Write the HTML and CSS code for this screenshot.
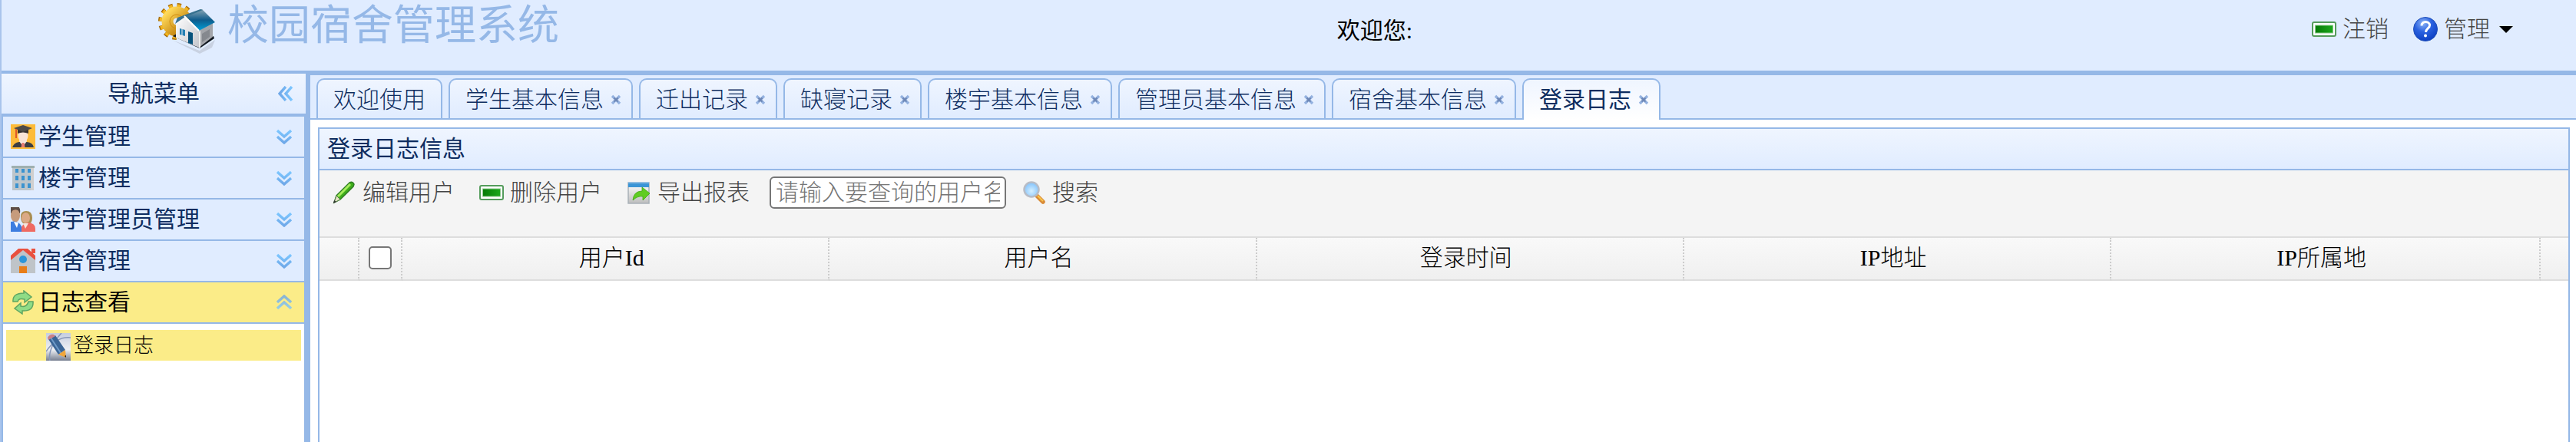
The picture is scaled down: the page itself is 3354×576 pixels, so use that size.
FILE: index.html
```html
<!DOCTYPE html>
<html lang="zh-CN">
<head>
<meta charset="utf-8">
<title>校园宿舍管理系统</title>
<link rel="stylesheet" href="styles.css">
</head>
<body>
<svg width="0" height="0" class="defs" aria-hidden="true">
  <defs>
    <linearGradient id="gold" x1="0" y1="0" x2="1" y2="1"><stop offset="0" stop-color="#ffd95a"/><stop offset="1" stop-color="#b87400"/></linearGradient>
    <linearGradient id="roof" x1="0" y1="0" x2="0" y2="1"><stop offset="0" stop-color="#8aa6b4"/><stop offset=".5" stop-color="#0f5c8c"/><stop offset="1" stop-color="#00a0d8"/></linearGradient>
    <linearGradient id="wall" x1="0" y1="0" x2="1" y2="1"><stop offset="0" stop-color="#fff"/><stop offset="1" stop-color="#c4c6cc"/></linearGradient>
    <linearGradient id="chev" x1="0" y1="0" x2="0" y2="1"><stop offset="0" stop-color="#7cc6ff"/><stop offset="1" stop-color="#6fa8e8"/></linearGradient>
    <linearGradient id="green" x1="0" y1="0" x2="1" y2="0"><stop offset="0" stop-color="#067a06"/><stop offset="1" stop-color="#1ca81c"/></linearGradient>
    <linearGradient id="sheet" x1="0" y1="0" x2="0" y2="1"><stop offset="0" stop-color="#fff"/><stop offset="1" stop-color="#bdbdbd"/></linearGradient>
    <radialGradient id="ball" cx=".4" cy=".25" r=".8"><stop offset="0" stop-color="#8db4f6"/><stop offset=".45" stop-color="#2b62e0"/><stop offset="1" stop-color="#0a3cc0"/></radialGradient>
    <radialGradient id="lens" cx=".5" cy=".6" r=".6"><stop offset="0" stop-color="#d4efff"/><stop offset="1" stop-color="#7fc0fb"/></radialGradient>
    <linearGradient id="sky" x1="0" y1="0" x2="0" y2="1"><stop offset="0" stop-color="#c4cde0"/><stop offset=".6" stop-color="#eef0f4"/><stop offset="1" stop-color="#777f90"/></linearGradient>
    <symbol id="i-down" viewBox="0 0 20 20"><path d="M1 2l9 8 9-8M1 10l9 8 9-8" fill="none" stroke="url(#chev)" stroke-width="3.400"/></symbol>
    <symbol id="i-minus" viewBox="0 0 32 20"><rect x="1" y="1" width="30" height="18" rx="2" fill="#fff" stroke="#559c5c" stroke-width="2"/><rect x="4.500" y="5" width="23" height="10" fill="url(#green)" stroke="#8fcb8f"/></symbol>
    <symbol id="i-close" viewBox="0 0 14 14"><path d="M2 2l10 10M12 2L2 12" stroke="#94b2e0" stroke-width="3.400"/><path d="M4.500 4.500l5 5M9.500 4.500l-5 5" stroke="#6d86b4" stroke-width="2"/></symbol>
  </defs>
</svg>

<header class="top">
  <svg class="logo" viewBox="0 0 76 72" aria-hidden="true">
    <circle cx="24" cy="28" r="20" fill="none" stroke="#a86c08" stroke-width="8" stroke-dasharray="5 5.470"/>
    <circle cx="24" cy="28" r="19" fill="none" stroke="#f3b51e" stroke-width="7" stroke-dasharray="4.400 5.547"/>
    <circle cx="24" cy="28" r="12" fill="none" stroke="url(#gold)" stroke-width="15"/>
    <circle cx="24" cy="28" r="9" fill="none" stroke="#d08c10" stroke-width="1"/>
    <path d="M18 52l36 14 20-14-4 10-16 8z" fill="#c9d2e2"/>
    <path d="M19 47l5-3 30 12 18-9 1 3-19 13z" fill="#111820"/>
    <path d="M23 30l12-9 18 20v21L23 49z" fill="url(#wall)"/>
    <path d="M53 40l18-12v20L53 62z" fill="#a3a5aa"/>
    <path d="M57 44l10-6v10l-10 7z" fill="#85888e"/>
    <path d="M53 41l2-1v22l-2 1z" fill="#eee"/>
    <path d="M35 20l22-8 17 17-21 11z" fill="url(#roof)"/>
    <path d="M22 31l3-8 30-11 3 1-23 9z" fill="#36718f"/>
    <path d="M34 21l19 19" stroke="#fff" stroke-width="2"/>
    <path d="M28 37l7 2v8l-7-2z" fill="#2580b4"/><path d="M31 37v10" stroke="#e3e8ee" stroke-width="1"/>
    <path d="M39 41l6 2v15l-6-2z" fill="#07527c"/>
  </svg>
  <h1>校园宿舍管理系统</h1>
  <p class="welcome">欢迎您:</p>
  <nav class="actions">
    <button class="btn"><svg class="w32 h20"><use href="#i-minus"/></svg>注销</button>
    <button class="btn"><svg class="w32 h32" viewBox="0 0 32 32"><circle cx="16" cy="16" r="15.500" fill="url(#ball)" stroke="#2150b8"/><path d="M11 11.500c0-7 10.500-6.500 10.500-.5 0 4-5 4-5 9" fill="none" stroke="#fff" stroke-width="3"/><circle cx="16" cy="24.500" r="2" fill="#fff"/></svg>管理<svg class="caret" viewBox="0 0 18 10"><path d="M0 1h18L9 10z"/></svg></button>
  </nav>
</header>

<div class="layout">
  <aside class="side">
    <div class="side-head"><h2>导航菜单</h2><button class="icon-btn" aria-label="收起"><svg class="w20 h20 turn"><use href="#i-down"/></svg></button></div>
    <nav class="menu">
      <button class="group"><svg class="w32 h32" viewBox="0 0 32 32"><path d="M0 0h32v32H0z" fill="#fdbb3a"/><path d="M2 30q2-6 9-7h10q8 1 9 7z" fill="#3c3e42"/><path d="M11 22l5 7 5-7-1-4h-8z" fill="#f7e9e2"/><path d="M14.500 24h3l1 6h-5z" fill="#e87d72"/><ellipse cx="16" cy="15" rx="6.500" ry="8" fill="#f8e3d7"/><path d="M9 7h14v5q-7-3-14 0z" fill="#36302f"/><path d="M4 5l12-4 12 4-12 5z" fill="#4d4a48"/><path d="M7 6v12" stroke="#e05a28" stroke-width="2"/></svg><span>学生管理</span><svg class="w20 h20"><use href="#i-down"/></svg></button>
      <button class="group"><svg class="w32 h32" viewBox="0 0 32 32"><path d="M2 2h28v30H2z" fill="#bcc5cb"/><path d="M1 0h30v3H1z" fill="#9fb0b0"/><path d="M26 3h4v29h-4z" fill="#d0cfcf"/><path d="M6 4h4v5H6zM14 4h4v5h-4zM22 4h4v5h-4zM6 13h4v6H6zM14 13h4v6h-4zM22 13h4v6h-4zM6 23h4v6H6zM14 23h4v6h-4zM22 23h4v6h-4z" fill="#3b93d0"/></svg><span>楼宇管理</span><svg class="w20 h20"><use href="#i-down"/></svg></button>
      <button class="group"><svg class="w32 h32" viewBox="0 0 32 32"><path d="M0 8V0h10q3 2 2 8z" fill="#50423c"/><ellipse cx="6" cy="11" rx="6" ry="8.500" fill="#c69b7c"/><path d="M0 6q5-5 12-1l-1-5H0z" fill="#5d4d45"/><path d="M0 19q10-2 14 6v7H0z" fill="#3d7de0"/><path d="M4 19l4 8 2-7z" fill="#fff"/><path d="M13 12q0-7 7-7 8 0 8 9 0 7-5 8h-5q-5-2-5-10z" fill="#a98d50"/><ellipse cx="19.500" cy="14" rx="5.500" ry="7" fill="#dba985"/><path d="M14 32v-6q2-5 9-6 9 1 9 8v4z" fill="#ef6a62"/><path d="M16 21l3 7 4-7z" fill="#f6e4da"/></svg><span>楼宇管理员管理</span><svg class="w20 h20"><use href="#i-down"/></svg></button>
      <button class="group"><svg class="w32 h32" viewBox="0 0 32 32"><path d="M0 14L16 2l16 12v18H0z" fill="#bfc4c8"/><path d="M24 0h7v10l-7-5z" fill="#e6e6e6"/><path d="M0 9L10 0h12l10 9v6L16 2 0 15z" fill="#e9503f"/><path d="M27 0h5v6h-5z" fill="#e9503f"/><circle cx="16" cy="14" r="5" fill="#2c95d8"/><path d="M11 23h10v9H11z" fill="#e87d18"/></svg><span>宿舍管理</span><svg class="w20 h20"><use href="#i-down"/></svg></button>
      <button class="group open"><svg class="w32 h32" viewBox="0 0 32 32"><path d="M3 15Q2 4 17 4V1l10 8-9 7v-4q-8-2-9 3z" fill="#8fdc86" stroke="#5fa562" stroke-width="1.500"/><path d="M29 15q1 13-14 12v4L5 24l8-7v4q8 2 10-6z" fill="#8fdc86" stroke="#5fa562" stroke-width="1.500"/></svg><span>日志查看</span><svg class="w20 h20 flip"><use href="#i-down"/></svg></button>
      <ul class="tree">
        <li><a href="#log"><svg class="w32 h36" viewBox="0 0 32 36"><path d="M0 0h32v36H0z" fill="url(#sky)"/><path d="M0 24q14-20 32-18M5 36Q2 20 20 0" fill="none" stroke="#8797b8" stroke-width="1.500"/><path d="M3 8l9-5 13 19-9 6z" fill="#3a6596"/><path d="M6 6l13 20" stroke="#6e9ac8" stroke-width="2"/><path d="M2 6q3-5 8-4l2 2-9 5z" fill="#c98188"/><path d="M16 28l9-6 1 10z" fill="#f0a63c"/><path d="M24 30l2 2v-3z" fill="#222"/></svg>登录日志</a></li>
      </ul>
    </nav>
  </aside>

  <main class="main">
    <div class="tabs">
      <div class="tab"><button>欢迎使用</button></div>
      <div class="tab"><button>学生基本信息</button><button class="close" aria-label="关闭"><svg><use href="#i-close"/></svg></button></div>
      <div class="tab"><button>迁出记录</button><button class="close" aria-label="关闭"><svg><use href="#i-close"/></svg></button></div>
      <div class="tab"><button>缺寝记录</button><button class="close" aria-label="关闭"><svg><use href="#i-close"/></svg></button></div>
      <div class="tab"><button>楼宇基本信息</button><button class="close" aria-label="关闭"><svg><use href="#i-close"/></svg></button></div>
      <div class="tab"><button>管理员基本信息</button><button class="close" aria-label="关闭"><svg><use href="#i-close"/></svg></button></div>
      <div class="tab"><button>宿舍基本信息</button><button class="close" aria-label="关闭"><svg><use href="#i-close"/></svg></button></div>
      <div class="tab selected"><button>登录日志</button><button class="close" aria-label="关闭"><svg><use href="#i-close"/></svg></button></div>
    </div>
    <section class="panel">
      <h2 class="panel-title">登录日志信息</h2>
      <div class="toolbar">
        <button class="btn"><svg class="w32 h32" viewBox="0 0 32 32"><path d="M3 29l3-9L23 3q4-2 6 2l-1 3-17 17z" fill="#3fae1c" stroke="#2e7d22" stroke-width="1.500"/><path d="M8 21L24 5" stroke="#a6ec5c" stroke-width="3"/><path d="M3 29l3-9 5 5z" fill="#e6e3c4" stroke="#59804e"/><path d="M2 30l1-4 3 2z" fill="#333"/></svg>编辑用户</button>
        <button class="btn"><svg class="w32 h20"><use href="#i-minus"/></svg>删除用户</button>
        <button class="btn"><svg class="w32 h32" viewBox="0 0 32 32"><path d="M2 3h27v27H2z" fill="url(#sheet)" stroke="#a9b1b8" stroke-width="1.500"/><path d="M2 2h27v7H2z" fill="#3a94d6"/><path d="M2 2h27v2H2z" fill="#8dbbe0"/><path d="M8 26q1-12 12-12V9l10 8-9 9v-5q-7-1-13 5z" fill="#5fcc22" stroke="#3ca80e" stroke-width=".8"/></svg>导出报表</button>
        <input class="query" type="text" placeholder="请输入要查询的用户名" aria-label="请输入要查询的用户名">
        <button class="btn"><svg class="w32 h32" viewBox="0 0 32 32"><path d="M20 20l8 8" stroke="#d98b38" stroke-width="5.500" stroke-linecap="round"/><path d="M21 20l7 7" stroke="#f8c64c" stroke-width="2"/><circle cx="13" cy="12" r="9.500" fill="url(#lens)" stroke="#b7bcc6" stroke-width="2.500"/></svg>搜索</button>
      </div>
      <table class="grid">
        <colgroup><col class="c-num"><col class="c-check"><col class="c-data"><col class="c-data"><col class="c-data"><col class="c-data"><col><col class="c-end"></colgroup>
        <thead><tr><th></th><th class="pick"><input type="checkbox" aria-label="全选"></th><th>用户Id</th><th>用户名</th><th>登录时间</th><th>IP地址</th><th>IP所属地</th><th></th></tr></thead>
      </table>
    </section>
  </main>
</div>
</body>
</html>
```
FILE: styles.css
```css
* { box-sizing: border-box; }
:root {
  --line: #95b8e7;
  --sky: #e0ecff;
  --ink: #0e2d5f;
}
body {
  margin: 0;
  min-height: 100vh;
  display: flex;
  flex-direction: column;
  border-left: 2px solid #a9c4ec;
  font: 300 30px/40px "Liberation Serif", "Noto Sans CJK SC", serif;
  color: #000;
}
h1, h2, p, ul { margin: 0; padding: 0; font-weight: 400; }
button {
  margin: 0;
  padding: 0;
  border: 0;
  background: none;
  font: inherit;
  color: inherit;
  cursor: pointer;
}
svg { display: block; flex: none; }
.defs { position: absolute; }
.w20 { width: 20px; }
.w32 { width: 32px; }
.h20 { height: 20px; }
.h32 { height: 32px; }
.h36 { height: 36px; }
.turn { transform: rotate(90deg); }
.flip { transform: rotate(180deg); opacity: .8; }

.top {
  display: grid;
  grid-template-columns: 76px 1fr auto 1fr;
  align-items: start;
  height: 96px;
  padding: 0 82px 0 204px;
  background: var(--sky);
  border-bottom: 4px solid var(--line);
}
.logo { width: 76px; height: 72px; }
.top h1 {
  padding: 2px 0 0 14px;
  font-size: 54px;
  line-height: 64px;
  color: var(--line);
}
.welcome { padding: 20px 0 0 26px; }
.actions {
  display: flex;
  justify-content: flex-end;
  gap: 32px;
  padding-top: 18px;
}
.btn { display: flex; align-items: center; gap: 8px; color: #444; }
.caret { width: 18px; height: 10px; margin-left: 4px; }

.layout {
  flex: 1;
  display: grid;
  grid-template-columns: 396px 1fr;
  column-gap: 6px;
  background: var(--line);
}
.side { display: flex; flex-direction: column; color: var(--ink); }
.side-head {
  display: flex;
  align-items: center;
  height: 56px;
  padding-right: 16px;
  background: linear-gradient(#eff5ff, var(--sky));
  border-bottom: 4px solid var(--line);
}
.side-head h2 { flex: 1; padding-left: 36px; font-size: 30px; text-align: center; }
.menu {
  flex: 1;
  display: flex;
  flex-direction: column;
  margin: 0 2px;
  background: #fff;
}
.group {
  display: flex;
  align-items: center;
  gap: 4px;
  height: 54px;
  padding: 0 16px 0 10px;
  background: var(--sky);
  border-bottom: 2px solid var(--line);
  font-weight: 400;
}
.group span { flex: 1; text-align: left; }
.open { background: #fbec88; color: #000; }
.tree { padding: 8px 4px; list-style: none; font-weight: 300; }
.tree a {
  display: flex;
  align-items: flex-end;
  gap: 4px;
  height: 40px;
  padding-left: 52px;
  background: #fbec88;
  color: #000;
  font-size: 26px;
  line-height: 38px;
  text-decoration: none;
}

.main {
  display: flex;
  flex-direction: column;
  min-width: 0;
  background: #fff;
  border-top: 2px solid var(--line);
}
.tabs {
  display: flex;
  gap: 8px;
  padding: 4px 0 0 8px;
  background: var(--sky);
  border-bottom: 2px solid var(--line);
}
.tab {
  display: flex;
  align-items: center;
  gap: 9px;
  height: 52px;
  padding: 2px 20px 0;
  border: 2px solid var(--line);
  border-bottom: 0;
  border-radius: 10px 10px 0 0;
  background: linear-gradient(#eff5ff, var(--sky));
  color: var(--ink);
}
.tab:has(.close) { padding-right: 13px; }
.tab.selected {
  height: 54px;
  margin-bottom: -2px;
  padding-bottom: 2px;
  background: linear-gradient(#eff5ff, #fff);
  font-weight: 400;
}
.close svg { width: 14px; height: 14px; }

.panel {
  flex: 1;
  margin: 10px 8px 0 10px;
  border: 2px solid var(--line);
  border-bottom: 0;
}
.panel-title {
  height: 54px;
  padding: 6px 10px;
  font-size: 30px;
  color: var(--ink);
  background: linear-gradient(#eff5ff, var(--sky));
  border-bottom: 2px solid var(--line);
}
.toolbar {
  display: flex;
  align-items: center;
  gap: 32px;
  height: 88px;
  padding: 4px 16px 32px;
  background: #f4f4f4;
  border-bottom: 2px solid #ddd;
}
.query {
  width: 308px;
  height: 42px;
  margin: 0 -12px 0 -6px;
  padding: 0 6px;
  border: 2px solid #767676;
  border-radius: 6px;
  background: #fff;
  font: inherit;
}
.query::placeholder { color: #757575; opacity: 1; }

.grid { width: 100%; table-layout: fixed; border-collapse: separate; border-spacing: 0; }
.grid th {
  height: 56px;
  padding: 0 10px 2px 0;
  font-weight: 300;
  text-align: center;
  border-bottom: 2px solid #ddd;
  border-right: 2px dotted #ccc;
}
.grid thead { background: linear-gradient(#f9f9f9, #efefef); }
.grid th:last-child { border-right: 0; }
.grid .pick { padding: 0 0 2px; }
.pick input {
  display: block;
  width: 30px;
  height: 30px;
  margin: 0 auto;
  appearance: none;
  background: #fff;
  border: 2px solid #767676;
  border-radius: 5px;
}
.c-num { width: 52px; }
.c-check { width: 56px; }
.c-data { width: 19%; }
.c-end { width: 36px; }
```
